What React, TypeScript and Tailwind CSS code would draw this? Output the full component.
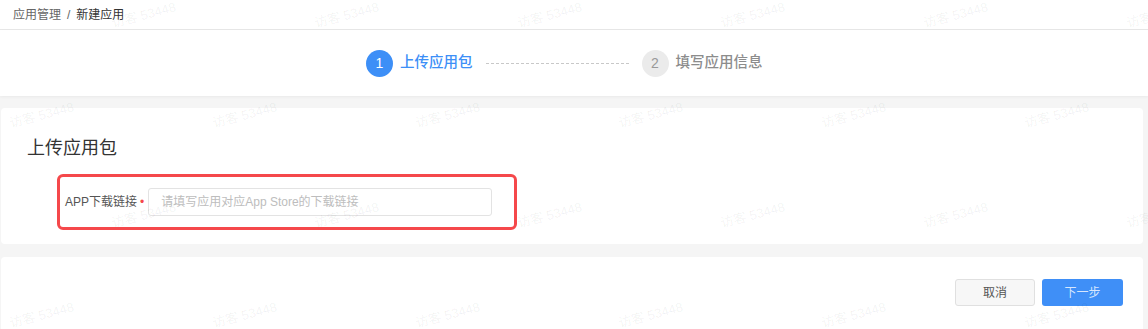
import React from 'react';

const marks: { x: number; y: number }[] = [];
for (let r = 0; r < 4; r++) {
  for (let c = 0; c < 6; c++) {
    marks.push({ x: (r % 2 === 0 ? 112 : 10) + c * 203, y: r * 100 + 4 });
  }
}

function Watermarks() {
  return (
    <div className="pointer-events-none absolute inset-0 overflow-hidden">
      {marks.map((m, i) => (
        <span
          key={i}
          className="absolute whitespace-nowrap text-[13px] text-black/[0.06] -rotate-[15deg] origin-left"
          style={{ left: m.x, top: m.y + 10 }}
        >
          访客 53448
        </span>
      ))}
    </div>
  );
}

export default function App() {
  return (
    <div className="relative h-[329px] w-full overflow-hidden bg-[#f5f5f5] font-['Liberation_Sans','Noto_Sans_CJK_SC',sans-serif]">
      {/* Breadcrumb */}
      <div className="flex h-[30px] items-center border-b border-[#e8e8e8] bg-white px-[13px] text-[12px]">
        <span className="text-[#666]">应用管理</span>
        <span className="mx-[6px] text-[#666]">/</span>
        <span className="text-[#333]">新建应用</span>
      </div>

      {/* Steps */}
      <div className="flex h-[66px] items-center bg-white pl-[366px] shadow-[0_1px_3px_rgba(0,0,0,0.05)]">
        <div className="flex items-center">
          <div className="flex h-[27px] w-[27px] items-center justify-center rounded-full bg-[#3d8ff7] text-[14px] text-white">1</div>
          <span className="ml-[7px] text-[14.5px] font-medium text-[#3d8ff7]">上传应用包</span>
        </div>
        <div className="mx-[13px] w-[143px] border-t border-dashed border-[#c8c8c8]" />
        <div className="flex items-center">
          <div className="flex h-[27px] w-[27px] items-center justify-center rounded-full bg-[#ebebeb] text-[14px] text-[#999]">2</div>
          <span className="ml-[7px] text-[14.5px] font-medium text-[#8c8c8c]">填写应用信息</span>
        </div>
      </div>

      {/* Upload card */}
      <div className="ml-[1px] mr-[5px] mt-[12px] rounded-[4px] bg-white pb-[14px] pl-[26px] pt-[29px]">
        <h2 className="text-[18px] leading-[22px] text-[#333]">上传应用包</h2>
        <div className="ml-[30px] mt-[15px] flex h-[56px] w-[460px] items-center rounded-[6px] border-[3px] border-[#f5484b] pl-[5px]">
          <label className="text-[12px] text-[#555]">APP下载链接</label>
          <span className="ml-[3px] text-[12px] leading-none text-[#f5484b]">•</span>
          <input
            className="ml-[4px] h-[28px] w-[344px] rounded-[3px] border border-[#e3e3e3] px-[12px] text-[12px] outline-none placeholder:text-[#bdbdbd]"
            placeholder="请填写应用对应App Store的下载链接"
          />
        </div>
      </div>

      {/* Footer card */}
      <div className="ml-[1px] mr-[5px] mt-[13px] flex h-[80px] justify-end gap-[7px] rounded-[4px] bg-white pr-[20px] pt-[22px]">
        <button className="h-[27px] w-[80px] rounded-[3px] border border-[#e0e0e0] bg-[#f7f7f7] text-[12px] text-[#555]">取消</button>
        <button className="h-[27px] w-[81px] rounded-[3px] bg-[#3f8ff7] text-[12px] text-[#d6e6fd]">下一步</button>
      </div>

      <Watermarks />
    </div>
  );
}
